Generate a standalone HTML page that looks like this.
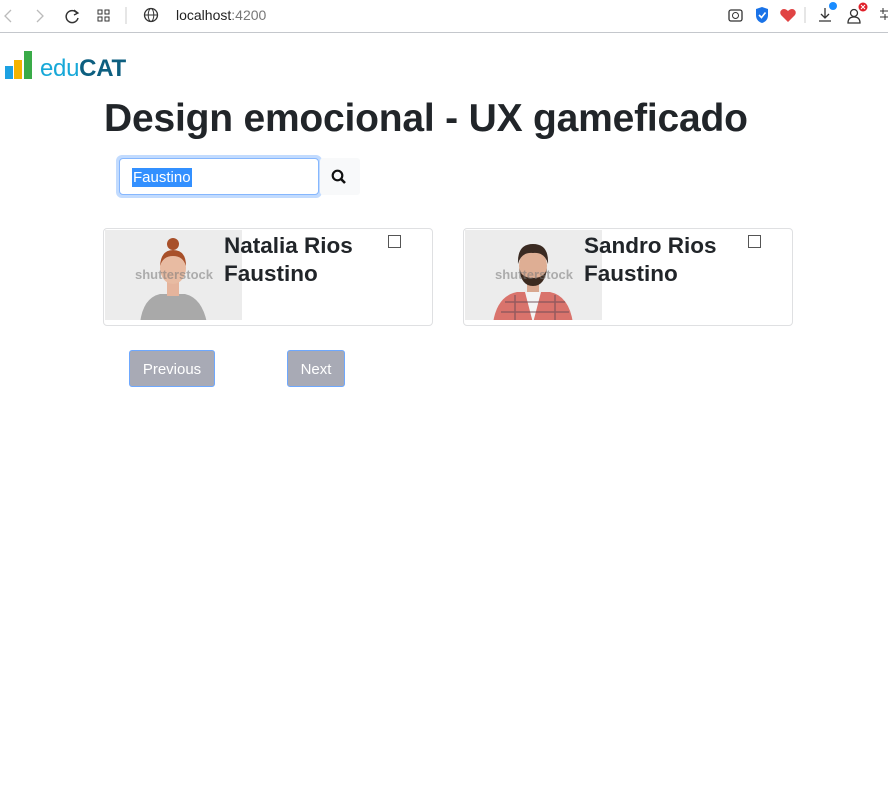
<!DOCTYPE html>
<html><head><meta charset="utf-8"><style>
*{box-sizing:border-box;margin:0;padding:0}
body{width:888px;height:806px;background:#fff;font-family:"Liberation Sans",sans-serif;position:relative;overflow:hidden;color:#212529}
.abs{position:absolute}
.bar{position:absolute;left:0;top:0;width:888px;height:33px;background:#fff;border-bottom:1px solid #c4c7cc}
.card{position:absolute;top:228px;width:330px;height:98px;border:1px solid #dfe0e2;border-radius:4px;overflow:hidden}
.photo{position:absolute;left:1px;top:1px;width:137px;height:93px;background:#ececec;overflow:hidden}
.name{position:absolute;left:120px;top:3px;font-size:22.5px;line-height:28px;font-weight:bold;color:#212529}
.cb{position:absolute;left:284px;top:6px;width:13px;height:13px;border:1px solid #555;background:#fff}
.wm{position:absolute;left:30px;top:37px;font-size:13px;font-weight:bold;color:rgba(120,120,120,.55)}
.btn{position:absolute;top:350px;height:37px;background:#a8aab5;border:1px solid #6ea8fe;border-radius:3px;color:#fff;font-size:15px;line-height:37px;text-align:center}
</style></head><body>
<div class="bar">
<svg class="abs" style="left:0;top:6px" width="280" height="20">
<path d="M11 4 L5 10 L11 16" stroke="#bbb" fill="none" stroke-width="1.3"/>
<path d="M37 4 L43 10 L37 16" stroke="#bbb" fill="none" stroke-width="1.3"/>
<path d="M77 7 A6 6 0 1 0 78 12" stroke="#333" fill="none" stroke-width="1.5"/><path d="M74 4 L78 7 L74 9" stroke="#333" fill="none" stroke-width="1.3"/>
<rect x="98" y="4" width="4" height="4" stroke="#333" fill="none"/><rect x="105" y="4" width="4" height="4" stroke="#333" fill="none"/><rect x="98" y="11" width="4" height="4" stroke="#333" fill="none"/><rect x="105" y="11" width="4" height="4" stroke="#333" fill="none"/>
<line x1="126" y1="1" x2="126" y2="18" stroke="#ccc"/>
<circle cx="151" cy="9" r="6.5" stroke="#333" fill="none" stroke-width="1.3"/><ellipse cx="151" cy="9" rx="2.8" ry="6.5" stroke="#333" fill="none"/><line x1="144.5" y1="9" x2="157.5" y2="9" stroke="#333"/>
</svg>
<div class="abs" style="left:176px;top:7px;font-size:14px;color:#222">localhost<span style="color:#777">:4200</span></div>
<svg class="abs" style="left:720px;top:2px" width="168" height="28">
<rect x="9" y="8" width="13" height="11" rx="2" stroke="#333" fill="none" stroke-width="1.3"/><circle cx="15.5" cy="13.5" r="3" stroke="#333" fill="none"/>
<path d="M36 7 L42 5 L48 7 L48 13 Q48 19 42 21 Q36 19 36 13Z" fill="#1a73e8"/><path d="M39 13 L41.5 15.5 L45.5 10.5" stroke="#fff" fill="none" stroke-width="1.6"/>
<path d="M68 20 L61 13 Q59 10 62 7.5 Q65 6 68 9 Q71 6 74 7.5 Q77 10 75 13Z" fill="#e04444"/>
<line x1="85" y1="5" x2="85" y2="21" stroke="#ccc"/>
<path d="M105 6 V16 M101 12 L105 16 L109 12 M99 19 H111" stroke="#333" fill="none" stroke-width="1.3"/><circle cx="113" cy="4" r="4" fill="#1a8cff"/>
<circle cx="134" cy="11" r="3.5" stroke="#333" fill="none" stroke-width="1.3"/><path d="M128 21 Q128 15 134 15 Q140 15 140 21Z" stroke="#333" fill="none" stroke-width="1.3"/><circle cx="143" cy="5" r="4.5" fill="#e0202a"/><path d="M141 3 L145 7 M145 3 L141 7" stroke="#fff"/>
<path d="M160 9 H168 M160 15 H168 M163 6 V12 M165 12 V18" stroke="#333"/>
</svg>
</div>
<svg class="abs" style="left:5px;top:50px" width="30" height="30">
<rect x="0" y="16" width="8" height="13" fill="#1da1e2"/><rect x="9" y="10" width="8" height="19" fill="#f5b400"/><rect x="19" y="1" width="8" height="28" fill="#3aab48"/>
</svg>
<div class="abs" style="left:40px;top:55px;font-size:24px;color:#17a8d8;letter-spacing:-0.3px">edu<b style="color:#0d5f80">CAT</b></div>
<div class="abs" style="left:104px;top:97px;font-size:39px;font-weight:bold;color:#212529;letter-spacing:-0.2px">Design emocional - UX gameficado</div>
<div class="abs" style="left:116px;top:155px;width:206px;height:43px;border-radius:6px;background:#c2dbfe"></div>
<div class="abs" style="left:119px;top:158px;width:200px;height:37px;border:1px solid #86b7fe;border-radius:4px;background:#fff"></div>
<div class="abs" style="left:132px;top:168px;height:19px;background:#3390ff;color:#fff;font-size:15px;line-height:19px;padding:0 1px">Faustino</div>
<div class="abs" style="left:320px;top:158px;width:40px;height:37px;background:#f8f9fa;border-radius:3px"></div>
<svg class="abs" style="left:331px;top:169px" width="16" height="16"><circle cx="6.5" cy="6.5" r="4.8" stroke="#111" stroke-width="2.2" fill="none"/><line x1="10" y1="10" x2="14" y2="14" stroke="#111" stroke-width="2.6"/></svg>

<div class="card" style="left:103px">
<div class="photo"><svg width="137" height="93">
<rect width="137" height="93" fill="#ececec"/>
<path d="M35 93 Q38 68 55 64 L80 64 Q97 68 102 93Z" fill="#a9a9a9"/>
<rect x="62" y="52" width="12" height="14" fill="#e5b49c"/>
<ellipse cx="68" cy="38" rx="13" ry="16" fill="#e8bba2"/>
<path d="M55 36 Q56 20 68 20 Q81 20 81 36 Q78 26 68 26 Q58 26 55 36Z" fill="#a8502a"/><circle cx="68" cy="14" r="6" fill="#a8502a"/>
<rect x="0" y="90" width="137" height="3" fill="#fff"/>
</svg><div class="wm">shutterstock</div></div>
<div class="name">Natalia Rios<br>Faustino</div><div class="cb"></div>
</div>
<div class="card" style="left:463px">
<div class="photo"><svg width="137" height="93">
<rect width="137" height="93" fill="#ececec"/>
<path d="M28 93 Q32 66 52 62 L85 62 Q104 66 108 93Z" fill="#d9736c"/>
<path d="M60 62 L68 93 L76 62Z" fill="#f4f4f4"/>
<path d="M40 72 H100 M36 82 H104 M50 65 V93 M90 65 V93" stroke="#6b4b55" stroke-width="1.5" opacity=".6"/>
<rect x="62" y="46" width="12" height="16" fill="#d9a890"/>
<ellipse cx="68" cy="36" rx="14" ry="17" fill="#deae94"/>
<path d="M54 38 Q56 56 68 56 Q80 56 82 38 Q80 48 68 48 Q56 48 54 38Z" fill="#3c2a20"/>
<path d="M53 34 Q52 14 68 14 Q84 14 83 34 Q80 22 68 23 Q56 22 53 34Z" fill="#3a2a22"/>
<rect x="0" y="90" width="137" height="3" fill="#fff"/>
</svg><div class="wm">shutterstock</div></div>
<div class="name">Sandro Rios<br>Faustino</div><div class="cb"></div>
</div>

<div class="btn" style="left:129px;width:86px">Previous</div>
<div class="btn" style="left:287px;width:58px">Next</div>
</body></html>
